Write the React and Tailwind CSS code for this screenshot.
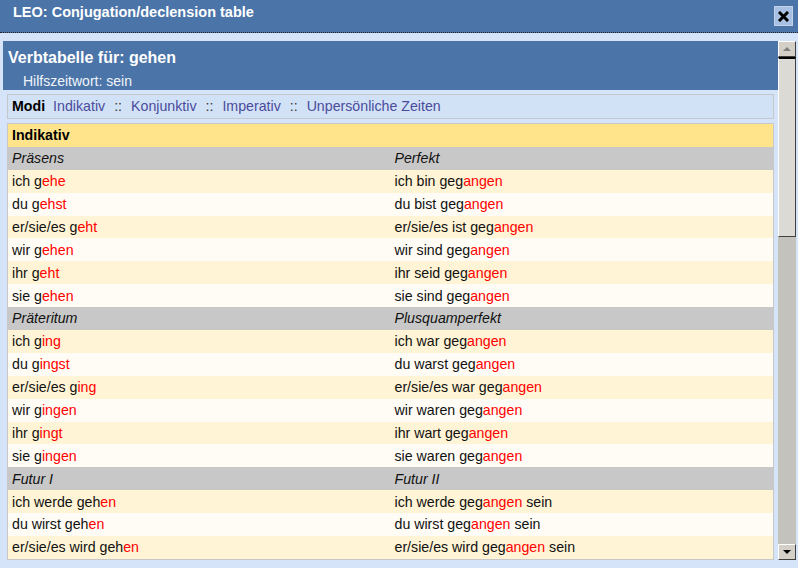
import React from "react";

const sections = [
  {
    left: "Präsens",
    right: "Perfekt",
    rows: [
      [["ich g", "ehe", ""], ["ich bin geg", "angen", ""]],
      [["du g", "ehst", ""], ["du bist geg", "angen", ""]],
      [["er/sie/es g", "eht", ""], ["er/sie/es ist geg", "angen", ""]],
      [["wir g", "ehen", ""], ["wir sind geg", "angen", ""]],
      [["ihr g", "eht", ""], ["ihr seid geg", "angen", ""]],
      [["sie g", "ehen", ""], ["sie sind geg", "angen", ""]],
    ],
  },
  {
    left: "Präteritum",
    right: "Plusquamperfekt",
    rows: [
      [["ich g", "ing", ""], ["ich war geg", "angen", ""]],
      [["du g", "ingst", ""], ["du warst geg", "angen", ""]],
      [["er/sie/es g", "ing", ""], ["er/sie/es war geg", "angen", ""]],
      [["wir g", "ingen", ""], ["wir waren geg", "angen", ""]],
      [["ihr g", "ingt", ""], ["ihr wart geg", "angen", ""]],
      [["sie g", "ingen", ""], ["sie waren geg", "angen", ""]],
    ],
  },
  {
    left: "Futur I",
    right: "Futur II",
    rows: [
      [["ich werde geh", "en", ""], ["ich werde geg", "angen", " sein"]],
      [["du wirst geh", "en", ""], ["du wirst geg", "angen", " sein"]],
      [["er/sie/es wird geh", "en", ""], ["er/sie/es wird geg", "angen", " sein"]],
    ],
  },
];

const Form = ({ parts }) => (
  <span>
    {parts[0]}
    <span className="text-[#ff0000]">{parts[1]}</span>
    {parts[2]}
  </span>
);

const Scrollbar = () => (
  <div className="flex w-[18px] shrink-0 flex-col bg-[#c4c2bc]">
    <div className="flex h-[16px] items-center justify-center border border-[#fff] border-r-[#404040] border-b-[#404040] bg-[#d4d0c8]">
      <div className="h-0 w-0 border-x-[4px] border-b-[4px] border-x-transparent border-b-[#808080]" />
    </div>
    <div className="h-[180px] border border-t-2 border-[#fff] border-t-[#000] border-r-[#404040] border-b-[#404040] bg-[#dcdad5]" />
    <div className="flex-1" />
    <div className="flex h-[16px] items-center justify-center border border-[#fff] border-r-[#404040] border-b-[#404040] bg-[#d4d0c8]">
      <div className="h-0 w-0 border-x-[4px] border-t-[4px] border-x-transparent border-t-[#000]" />
    </div>
  </div>
);

const App = () => {
  return (
    <div className="h-[568px] w-[798px] overflow-hidden bg-[#d6e4f9] font-['Liberation_Sans',Arial,sans-serif] text-[14.2px] text-[#111]">
      <div className="flex h-[33px] items-start justify-between border-b border-dotted border-b-[#222] bg-[#4b74a8] pl-[13px] pr-[5px]">
        <h1 className="pt-[3px] text-[14.5px] leading-[18px] font-bold text-white">
          LEO: Conjugation/declension table
        </h1>
        <button
          type="button"
          className="mt-[6px] flex h-[20px] w-[19px] items-center justify-center border border-[#c0d2ea] bg-[#a8c0e2]"
        >
          <svg width="11" height="11" viewBox="0 0 11 11">
            <path d="M2 2 L9 9 M9 2 L2 9" stroke="#000" strokeWidth="3" strokeLinecap="square" />
          </svg>
        </button>
      </div>

      <div className="mt-[8px] ml-[3px] flex h-[519px] w-[793px]">
        <div className="flex-1 overflow-hidden">
          <div className="h-[49px] bg-[#4b74a8] pl-[5px] text-white">
            <div className="pt-[7px] text-[16px] leading-[20px] font-bold">Verbtabelle für: gehen</div>
            <div className="mt-[5px] pl-[15px] text-[14px] leading-[17px] text-[#f0f4fa]">Hilfszeitwort: sein</div>
          </div>

          <div className="mx-[4px] mt-[4px] flex h-[25px] items-center gap-[9px] border border-[#c4c8cc] bg-[#d2e2f6] pt-[1px] pl-[4px]">
            <span className="mr-[-1px] font-bold text-black">Modi</span>
            <span className="text-[#4b4b9c]">Indikativ</span>
            <span className="text-[#333]">::</span>
            <span className="text-[#4b4b9c]">Konjunktiv</span>
            <span className="text-[#333]">::</span>
            <span className="text-[#4b4b9c]">Imperativ</span>
            <span className="text-[#333]">::</span>
            <span className="text-[#4b4b9c]">Unpersönliche Zeiten</span>
          </div>

          <div className="mx-[4px] mt-[4px] border border-[#c8c8c8]">
            <div className="flex h-[22.9px] items-center bg-[#ffe48c] pt-[1px] pl-[4px] font-bold text-black">Indikativ</div>
            {sections.map((section) => (
              <div key={section.left}>
                <div className="grid h-[22.9px] grid-cols-2 items-center bg-[#c8c8c8] pt-[1px] italic">
                  <span className="pl-[4px]">{section.left}</span>
                  <span className="pl-[4px]">{section.right}</span>
                </div>
                {section.rows.map((row, i) => (
                  <div
                    key={i}
                    className={`grid h-[22.9px] grid-cols-2 items-center pt-[1px] ${
                      i % 2 === 0 ? "bg-[#fff4d5]" : "bg-[#fffcf5]"
                    }`}
                  >
                    <span className="pl-[4px]">
                      <Form parts={row[0]} />
                    </span>
                    <span className="pl-[4px]">
                      <Form parts={row[1]} />
                    </span>
                  </div>
                ))}
              </div>
            ))}
          </div>
        </div>
        <Scrollbar />
      </div>
    </div>
  );
};

export default App;
